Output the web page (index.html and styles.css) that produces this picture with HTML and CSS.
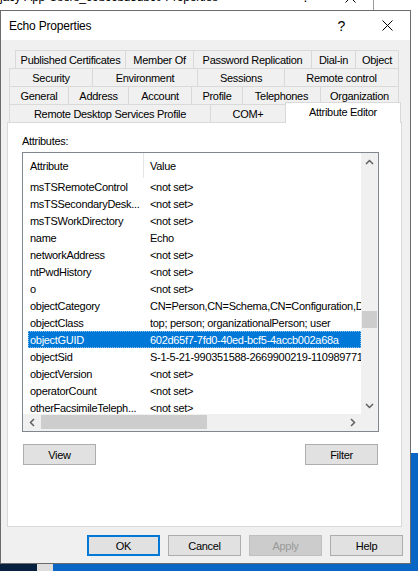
FILE: index.html
```html
<!DOCTYPE html>
<html>
<head>
<meta charset="utf-8">
<title>Echo Properties</title>
<link rel="stylesheet" href="styles.css">
</head>
<body>
<div class="desktop">
  <div class="wallpaper"></div>
  <div class="back-window">
    <div class="back-titlebar">
      <span class="back-title">jacy-App-Users_69bc6bd5dbc0 Properties</span>
      <span class="cap-btn back-help">?</span>
      <span class="cap-btn back-close"><svg width="11" height="11" viewBox="0 0 11 11"><path d="M0.5 0.5L10.5 10.5M10.5 0.5L0.5 10.5" stroke="#000" stroke-width="1" fill="none"/></svg></span>
    </div>
  </div>

  <div class="dialog">
    <div class="titlebar">
      <span class="title">Echo Properties</span>
      <span class="cap-btn help">?</span>
      <span class="cap-btn close"><svg width="11" height="11" viewBox="0 0 11 11"><path d="M0.5 0.5L10.5 10.5M10.5 0.5L0.5 10.5" stroke="#000" stroke-width="1" fill="none"/></svg></span>
    </div>

    <div class="body">
      <div class="tabs">
        <div class="tab-row row1">
          <div class="tab">Published Certificates</div>
          <div class="tab">Member Of</div>
          <div class="tab">Password Replication</div>
          <div class="tab">Dial-in</div>
          <div class="tab">Object</div>
        </div>
        <div class="tab-row row2">
          <div class="tab">Security</div>
          <div class="tab">Environment</div>
          <div class="tab">Sessions</div>
          <div class="tab">Remote control</div>
        </div>
        <div class="tab-row row3">
          <div class="tab">General</div>
          <div class="tab">Address</div>
          <div class="tab">Account</div>
          <div class="tab">Profile</div>
          <div class="tab">Telephones</div>
          <div class="tab">Organization</div>
        </div>
        <div class="tab-row row4">
          <div class="tab">Remote Desktop Services Profile</div>
          <div class="tab">COM+</div>
          <div class="tab active">Attribute Editor</div>
        </div>
      </div>

      <div class="page">
        <div class="label">Attributes:</div>
        <div class="listbox">
          <div class="list-main">
            <div class="list-view">
              <div class="lv-header">
                <div class="hcell1">Attribute</div>
                <div class="hcell2">Value</div>
              </div>
              <div class="lv-row"><div class="c1">msTSRemoteControl</div><div class="c2">&lt;not set&gt;</div></div>
              <div class="lv-row"><div class="c1">msTSSecondaryDesk...</div><div class="c2">&lt;not set&gt;</div></div>
              <div class="lv-row"><div class="c1">msTSWorkDirectory</div><div class="c2">&lt;not set&gt;</div></div>
              <div class="lv-row"><div class="c1">name</div><div class="c2">Echo</div></div>
              <div class="lv-row"><div class="c1">networkAddress</div><div class="c2">&lt;not set&gt;</div></div>
              <div class="lv-row"><div class="c1">ntPwdHistory</div><div class="c2">&lt;not set&gt;</div></div>
              <div class="lv-row"><div class="c1">o</div><div class="c2">&lt;not set&gt;</div></div>
              <div class="lv-row"><div class="c1">objectCategory</div><div class="c2">CN=Person,CN=Schema,CN=Configuration,DC=corp,DC=local</div></div>
              <div class="lv-row"><div class="c1">objectClass</div><div class="c2">top; person; organizationalPerson; user</div></div>
              <div class="lv-row selected"><div class="c1">objectGUID</div><div class="c2">602d65f7-7fd0-40ed-bcf5-4accb002a68a</div></div>
              <div class="lv-row"><div class="c1">objectSid</div><div class="c2">S-1-5-21-990351588-2669900219-1109897712-1105</div></div>
              <div class="lv-row"><div class="c1">objectVersion</div><div class="c2">&lt;not set&gt;</div></div>
              <div class="lv-row"><div class="c1">operatorCount</div><div class="c2">&lt;not set&gt;</div></div>
              <div class="lv-row"><div class="c1">otherFacsimileTeleph...</div><div class="c2">&lt;not set&gt;</div></div>
            </div>
            <div class="vscroll">
              <div class="sb-btn"><svg width="9" height="6" viewBox="0 0 9 6"><path d="M1 5L4.5 1.5L8 5" fill="none" stroke="#606060" stroke-width="1.5"/></svg></div>
              <div class="vthumb"></div>
              <div class="sb-fill"></div>
              <div class="sb-btn"><svg width="9" height="6" viewBox="0 0 9 6"><path d="M1 1L4.5 4.5L8 1" fill="none" stroke="#606060" stroke-width="1.5"/></svg></div>
            </div>
          </div>
          <div class="hscroll-row">
            <div class="hscroll">
              <div class="sb-btn"><svg width="6" height="9" viewBox="0 0 6 9"><path d="M5 1L1.5 4.5L5 8" fill="none" stroke="#606060" stroke-width="1.5"/></svg></div>
              <div class="hthumb"></div>
              <div class="sb-fill"></div>
              <div class="sb-btn"><svg width="6" height="9" viewBox="0 0 6 9"><path d="M1 1L4.5 4.5L1 8" fill="none" stroke="#606060" stroke-width="1.5"/></svg></div>
            </div>
            <div class="corner"></div>
          </div>
        </div>
        <div class="page-buttons">
          <button class="btn">View</button>
          <button class="btn">Filter</button>
        </div>
      </div>

      <div class="dialog-buttons">
        <button class="btn default">OK</button>
        <button class="btn">Cancel</button>
        <button class="btn disabled">Apply</button>
        <button class="btn">Help</button>
      </div>
    </div>
  </div>
</div>
</body>
</html>
```

FILE: styles.css
```css
* { box-sizing: border-box; }
html, body { margin: 0; padding: 0; }
body {
  width: 418px;
  height: 571px;
  overflow: hidden;
  font-family: "Liberation Sans", Arial, sans-serif;
  font-size: 11px;
  letter-spacing: -0.3px;
  color: #000;
  background: #fff;
}
.desktop {
  position: relative;
  width: 418px;
  height: 571px;
  overflow: hidden;
  background: #fff;
}
.wallpaper {
  position: absolute;
  left: 0; right: 0; top: 453px; bottom: 0;
  background: linear-gradient(to right, #08203f 0, #08203f 37px, #dedede 37px, #dedede 53px, #0a66c4 53px);
}
.back-window {
  position: absolute;
  left: -10px;
  top: -18px;
  width: 384px;
  height: 471px;
  background: #fff;
  border-right: 1px solid #9a9a9a;
}
.back-titlebar {
  display: flex;
  align-items: center;
  height: 30px;
  padding-left: 10px;
  font-size: 12px;
  letter-spacing: -0.2px;
}
.back-title { flex: 1; white-space: nowrap; }
.cap-btn {
  display: flex;
  align-items: center;
  justify-content: center;
  height: 100%;
  flex: none;
}
.back-help { width: 45px; font-size: 14px; }
.back-close { width: 45px; }

.dialog {
  position: absolute;
  left: 0;
  top: 10px;
  width: 411px;
  height: 554px;
  border: 1px solid rgba(0, 0, 0, 0.55);
  background: #f0f0f0;
  display: flex;
  flex-direction: column;
}
.titlebar {
  flex: none;
  height: 29px;
  background: #fff;
  display: flex;
  align-items: center;
  padding-left: 8px;
  font-size: 12px;
  letter-spacing: -0.2px;
}
.title { flex: 1; white-space: nowrap; }
.help { width: 47px; font-size: 14px; letter-spacing: 0; }
.close { width: 45px; }

.body {
  flex: 1;
  padding: 10px 8px 0 6px;
  display: flex;
  flex-direction: column;
}
.tabs { margin-left: 2px; flex: none; }
.tab-row { display: grid; height: 18px; }
.row1 { margin-left: 6px; grid-template-columns: 110px 68px 118px 44px 44px; }
.row2 { grid-template-columns: 83px 105px 87px 115px; }
.row3 { grid-template-columns: 59px 60px 63px 51px 78px 79px; }
.row4 { grid-template-columns: 201px 75px 116px; }
.tab {
  border-top: 1px solid #d9d9d9;
  border-left: 1px solid #d9d9d9;
  background: #f0f0f0;
  display: flex;
  align-items: center;
  justify-content: center;
  white-space: nowrap;
}
.tab:last-child { border-right: 1px solid #d9d9d9; }
.tab.active {
  background: #fff;
  margin-top: -2px;
  margin-bottom: -1px;
  position: relative;
  z-index: 1;
  padding-bottom: 2px;
}

.page {
  flex: none;
  height: 405px;
  background: #fff;
  border: 1px solid #d9d9d9;
  padding: 11px 0 0 14px;
}
.label { line-height: 14px; }
.listbox {
  margin-top: 4px;
  width: 357px;
  height: 280px;
  border: 1px solid #82878f;
  display: flex;
  flex-direction: column;
}
.list-main { display: flex; height: 261px; flex: none; }
.list-view {
  width: 338px;
  flex: none;
  overflow: hidden;
  background: #fff;
}
.lv-header { display: flex; height: 25px; }
.hcell1 {
  width: 121px;
  flex: none;
  padding-left: 7px;
  border-right: 1px solid #e5e5e5;
  display: flex;
  align-items: center;
}
.hcell2 { padding-left: 6px; display: flex; align-items: center; }
.lv-row {
  display: flex;
  height: 17px;
  margin-left: 5px;
  align-items: center;
  white-space: nowrap;
}
.c1 { width: 115px; flex: none; padding-left: 2px; overflow: hidden; }
.c2 { flex: none; padding-left: 7px; }
.lv-row.selected {
  background: #0078d7;
  color: #fff;
  outline: 1px dotted rgba(255, 255, 255, 0.55);
  outline-offset: -1px;
}
.vscroll {
  width: 17px;
  flex: none;
  background: #f0f0f0;
  display: flex;
  flex-direction: column;
}
.sb-btn {
  width: 17px;
  height: 17px;
  flex: none;
  display: flex;
  align-items: center;
  justify-content: center;
}
.vthumb { flex: none; margin: 141px 1px 0; height: 17px; background: #cdcdcd; }
.sb-fill { flex: 1; }
.hscroll-row { display: flex; height: 17px; flex: none; }
.hscroll { width: 338px; flex: none; display: flex; background: #f0f0f0; }
.hthumb { flex: none; width: 166px; height: 14px; margin: 1px 0 0 1px; background: #cdcdcd; }
.corner { width: 17px; background: #f0f0f0; }

.page-buttons {
  display: flex;
  justify-content: space-between;
  width: 355px;
  margin: 12px 0 0 1px;
}
.btn {
  width: 73px;
  height: 21px;
  padding: 0;
  border: 1px solid #adadad;
  background: #e1e1e1;
  font-family: inherit;
  font-size: 11px;
  letter-spacing: -0.3px;
  color: #000;
  display: flex;
  align-items: center;
  justify-content: center;
}
.btn.default { border: 2px solid #0078d7; }
.btn.disabled { background: #cccccc; border-color: #bfbfbf; color: #9a9a9a; }
.dialog-buttons {
  display: flex;
  justify-content: flex-end;
  gap: 8px;
  margin: 8px -1px 0 0;
}
```
